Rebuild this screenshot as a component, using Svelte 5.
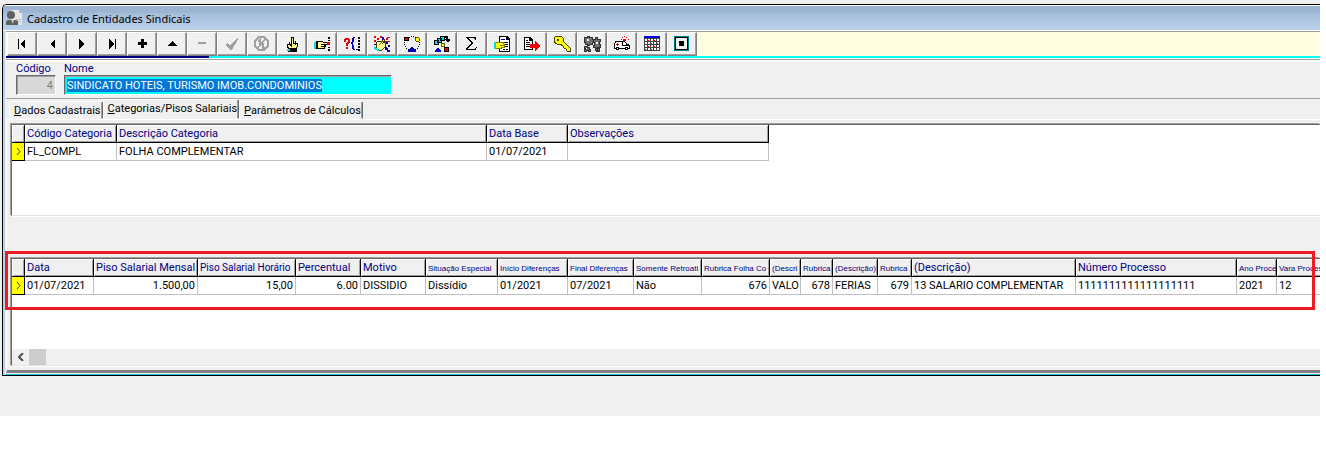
<script lang="ts">
  import { onMount } from "svelte";

  type Shape = { d: string; fill?: string; stroke?: string; width?: number };
  type Tool = { label: string; shapes: Shape[]; disabled?: boolean };
  type Column = { title: string; width: number; value: string; size?: "small" | "medium"; right?: boolean };

  const ink = "#000";
  const grey = "#a0a0a0";
  const red = "#f00000";
  const blue = "#0000c0";
  const yellow = "#ffff00";
  const cream = "#ffff90";
  const cyan = "#00e0e0";

  const tools: Tool[] = [
    { label: "Primeiro", shapes: [{ d: "M5 4h1v10H5zM12 4v10L7 9z", fill: ink }] },
    { label: "Anterior", shapes: [{ d: "M12 4v10L7 9z", fill: ink }] },
    { label: "Próximo", shapes: [{ d: "M6 4v10l5-5z", fill: ink }] },
    { label: "Último", shapes: [{ d: "M6 4v10l5-5zM12 4h1v10h-1z", fill: ink }] },
    { label: "Incluir", shapes: [{ d: "M8 4h3v3h3v3h-3v3H8v-3H5V7h3z", fill: ink }] },
    { label: "Editar", shapes: [{ d: "M4 11l5-5 5 5z", fill: ink }] },
    { label: "Excluir", disabled: true, shapes: [{ d: "M5 7h8v2H5z", fill: grey }] },
    { label: "Confirmar", disabled: true, shapes: [{ d: "M2 10l2-2 3 3 7-8 1 1-6 11H7z", fill: grey }] },
    {
      label: "Cancelar",
      disabled: true,
      shapes: [
        { d: "M6 2h5l4 4v5l-4 4H6l-4-4V6zM4 14L13 3M7 5v5M10 8v5M5 6l3-2M9 13h3", stroke: grey, width: 1.5 },
      ],
    },
    {
      label: "Selecionar",
      shapes: [
        { d: "M8 2h2v6h4v4l-1 2H6l-2-3V9h2l2 2z", fill: cream, stroke: ink },
        { d: "M10 4v5M12 6v4M6 7l2 4", stroke: ink },
        { d: "M5 13h9v4H5z", fill: ink },
        { d: "M4 14h3v2H4z", fill: cyan },
      ],
    },
    {
      label: "Localizar",
      shapes: [
        { d: "M4 6h4l2 1h5v2h-4v1h1v1h-1v2H4z", fill: cream, stroke: ink },
        { d: "M8 9h3M8 11h3", stroke: ink },
        { d: "M1 7h2v7H1z", fill: cyan },
        { d: "M3 6h1v8H3zM15 2h2v2h-2zM15 5h2v1h-2zM15 12h2v1h-2zM15 14h2v2h-2z", fill: ink },
        { d: "M14 7h3v3h-3z", fill: red },
      ],
    },
    {
      label: "Consultar",
      shapes: [
        { d: "M1 4h1V3h4v1h1v4H6v1H5v2H3V8h1V7h1V5H3v2H1zM3 12h2v2H3z", fill: red },
        { d: "M12 2h-2v1H9v4H8v2h1v5h1v1h2v-1h-1v-4h-1V7h1V3h1z", fill: blue },
        { d: "M15 2h2v2h-2zM15 5h2v2h-2zM15 8h2v2h-2zM15 11h2v2h-2zM15 14h2v2h-2zM13 14h2v1h-2z", fill: ink },
      ],
    },
    {
      label: "Filtrar",
      shapes: [
        { d: "M1 1h2v2H1zM4 3h2v2H4zM1 5h2v2H1zM7 1h2v2H7zM14 2h3v1h-2v2h-2V3h1zM12 6h5v1h-5z", fill: red },
        { d: "M9 2h2v3H9zM13 7h2v2h-2zM15 10h2v2h-2zM12 12h2v1h1v2h2v2h-3v-2h-2zM1 9h2v1H1z", fill: blue },
        { d: "M4 7l2-1 2 1 3-3 1 1-2 3 2-1v5l-3 3H5l-2-2z", fill: cream, stroke: "#404000" },
        { d: "M6 10l4-4", stroke: "#808000" },
        { d: "M1 12h2v1h1v1h2v2H4v-1H2v-1H1z", fill: cyan },
      ],
    },
    {
      label: "Processar",
      shapes: [
        {
          d: "M6 2h1v1H6zM8 1h1v1H8zM10 1h1v1h-1zM12 2h1v1h-1zM16 7h1v1h-1zM16 9h1v1h-1zM15 11h1v1h-1zM14 13h1v1h-1zM12 14h1v1h-1zM1 7h1v1H1zM1 9h1v1H1zM2 11h1v1H2zM3 13h1v1H3zM5 14h1v1H5z",
          fill: ink,
        },
        { d: "M1 2h5v4H1z", fill: ink },
        { d: "M2 3h3v2H2z", fill: red },
        { d: "M13 2h3v1h1v3h-1v1h-3V6h-1V3h1z", fill: "#606000" },
        { d: "M13 3h3v3h-3z", fill: yellow },
        { d: "M8 12h2v1h1v1h1v1h1v2H5v-2h1v-1h1v-1h1z", fill: blue },
      ],
    },
    {
      label: "Reorganizar",
      shapes: [
        { d: "M1 5h4v4H1zM4 3h4v4H4zM7 1h4v4H7z", fill: cyan, stroke: ink },
        { d: "M11 1h4v3h2v1l-2 3-3-3V4h1V3h-2z", fill: ink },
        { d: "M8 8h4v4H8z", fill: "#606000" },
        { d: "M9 9h2v2H9z", fill: yellow },
        { d: "M11 12h5v5h-5z", fill: ink },
        { d: "M12 13h3v3h-3z", fill: red },
        { d: "M4 13h2v1h1v1h1v2H2v-2h1v-1h1z", fill: blue },
      ],
    },
    { label: "Somar", shapes: [{ d: "M3 2h10v3h-1L11 3H6l4 5-5 6h6l2-2h1l-1 3H3v-1l5-6-5-5z", fill: ink }] },
    {
      label: "Visualizar",
      shapes: [
        { d: "M6 1h8l3 3v13H6z", fill: ink },
        { d: "M7 2h6v3h3v11H7z", fill: "#fff" },
        { d: "M8 4h4v1H8z", fill: blue },
        { d: "M10 7h5v1h-5zM12 9h3v1h-3zM12 11h3v1h-3zM10 14h2v1h-2zM13 14h2v1h-2z", fill: ink },
        { d: "M3 7h8v2h1v4H9v1H3z", fill: "#808000" },
        { d: "M3 8h7v1h1v1H7v1h4v1H8v1H3z", fill: yellow },
        { d: "M1 7h2v7H1z", fill: cyan },
      ],
    },
    {
      label: "Exportar",
      shapes: [
        { d: "M1 2h6l3 3v10H1z", fill: ink },
        { d: "M2 3h4v3h3v8H2z", fill: "#fff" },
        { d: "M3 5h2v1H3zM3 7h4v1H3zM3 9h4v1H3zM3 11h4v1H3z", fill: ink },
        { d: "M7 9h5V6l5 5-5 5v-3H7z", fill: red },
      ],
    },
    {
      label: "Acessos",
      shapes: [
        { d: "M3 1h5l2 2v3l7 7v3h-3l-1-2-2-1-1-2-3-2H4L1 7V3z", fill: yellow, stroke: "#404000" },
        { d: "M4 4h2v2H4z", fill: "#404000" },
      ],
    },
    {
      label: "Configurar",
      shapes: [
        {
          d: "M1 2h3V1h2v1h3v2h1v3H9v2H6v1H4V9H2V7H1zM10 4h2V2h2v2h3v2h-1v3h1v3h-3v3h-2v-3h-2v-2h1V7h-1zM1 11h3v1h2v2h1v2H5v-1H3v1H1v-2h1v-1H1zM12 13h4v3h-3z",
          fill: "#707070",
          stroke: "#303030",
        },
        { d: "M4 4h2v2H4zM13 7h2v2h-2zM3 13h1v1H3z", fill: "#f0f0f0" },
      ],
    },
    {
      label: "Suporte",
      shapes: [
        { d: "M2 6h10v1h1v1h1v1h2v1h1v4H1V8h1z", fill: ink },
        { d: "M2 8h1V7h6v4h7v2H2zM10 7h2v1h1v2h-3z", fill: "#fff" },
        { d: "M3 9h3v1H3zM4 8h1v3H4zM9 2h1v1H9zM11 1h1v1h-1zM13 2h1v1h-1zM10 4h3v2h-3zM8 4h1v1H8zM15 4h1v1h-1z", fill: red },
        { d: "M3 12h3v3H3zM12 12h3v3h-3z", fill: ink },
        { d: "M4 13h1v1H4zM13 13h1v1h-1z", fill: "#fff" },
      ],
    },
    {
      label: "Calendário",
      shapes: [
        { d: "M1 1h16v15H1z", fill: "#404040" },
        {
          d: "M2 4h2v2H2zM5 4h2v2H5zM8 4h2v2H8zM11 4h2v2h-2zM14 4h2v2h-2zM2 7h2v2H2zM5 7h2v2H5zM8 7h2v2H8zM11 7h2v2h-2zM14 7h2v2h-2zM2 10h2v2H2zM5 10h2v2H5zM8 10h2v2H8zM11 10h2v2h-2zM14 10h2v2h-2zM2 13h2v2H2zM5 13h2v2H5zM8 13h2v2H8zM11 13h2v2h-2zM14 13h2v2h-2z",
          fill: "#fff",
        },
        { d: "M1 1h16v2H1z", fill: "#0000e0" },
        { d: "M5 5h1v1H5zM11 5h1v1h-1zM8 8h1v1H8zM14 8h1v1h-1zM5 11h1v1H5zM11 11h1v1h-1zM2 14h1v1H2zM8 14h1v1H8z", fill: red },
      ],
    },
    {
      label: "Fechar",
      shapes: [
        { d: "M1 1h15v15H1z", fill: "#008080" },
        { d: "M2 2h13v13H2z", fill: ink },
        { d: "M3 3h11v11H3z", fill: "#f0f0f0" },
        { d: "M6 6h5v5H6z", fill: ink },
      ],
    },
  ];

  const tabs = ["Dados Cadastrais", "Categorias/Pisos Salariais", "Parâmetros de Cálculos"];
  let activeTab = $state(1);
  let nameInput: HTMLInputElement;

  const categories: Column[] = [
    { title: "Código Categoria", width: 92, value: "FL_COMPL" },
    { title: "Descrição Categoria", width: 370, value: "FOLHA COMPLEMENTAR" },
    { title: "Data Base", width: 81, value: "01/07/2021" },
    { title: "Observações", width: 201, value: "" },
  ];

  const wages: Column[] = [
    { title: "Data", width: 69, value: "01/07/2021" },
    { title: "Piso Salarial Mensal", width: 104, value: "1.500,00", right: true },
    { title: "Piso Salarial Horário", width: 98, value: "15,00", right: true, size: "medium" },
    { title: "Percentual", width: 65, value: "6.00", right: true },
    { title: "Motivo", width: 65, value: "DISSIDIO" },
    { title: "Situação Especial", width: 72, value: "Dissídio", size: "small" },
    { title: "Início Diferenças", width: 70, value: "01/2021", size: "small" },
    { title: "Final Diferenças", width: 66, value: "07/2021", size: "small" },
    { title: "Somente Retroati", width: 68, value: "Não", size: "small" },
    { title: "Rubrica Folha Co", width: 68, value: "676", right: true, size: "small" },
    { title: "(Descri", width: 31, value: "VALO", size: "small" },
    { title: "Rubrica", width: 32, value: "678", right: true, size: "small" },
    { title: "(Descrição)", width: 45, value: "FERIAS", size: "small" },
    { title: "Rubrica", width: 34, value: "679", right: true, size: "small" },
    { title: "(Descrição)", width: 164, value: "13 SALARIO COMPLEMENTAR" },
    { title: "Número Processo", width: 161, value: "1111111111111111111" },
    { title: "Ano Proce", width: 40, value: "2021", size: "small" },
    { title: "Vara Processo", width: 60, value: "12", size: "small" },
  ];

  const totalWidth = (columns: Column[]) => columns.reduce((sum, column) => sum + column.width, 13);

  onMount(() => {
    nameInput.focus();
    nameInput.select();
  });
</script>

{#snippet grid(columns: Column[])}
  <table style:width="{totalWidth(columns)}px">
    <colgroup>
      <col class="marker-col" />
      {#each columns as column}
        <col style:width="{column.width}px" />
      {/each}
    </colgroup>
    <thead>
      <tr>
        <th></th>
        {#each columns as column}
          <th scope="col" class={column.size}>{column.title}</th>
        {/each}
      </tr>
    </thead>
    <tbody>
      <tr>
        <td class="marker">
          <svg width="5" height="7" viewBox="0 0 5 7"><path d="M1 0l3 3.5L1 7" fill="none" stroke="#404000" /></svg>
        </td>
        {#each columns as column}
          <td class:right={column.right}>{column.value}</td>
        {/each}
      </tr>
    </tbody>
  </table>
{/snippet}

<div class="desktop">
  <main class="window">
    <header class="titlebar">
      <svg width="17" height="16" viewBox="0 0 17 16" aria-hidden="true">
        <path d="M5 0h8l3 3v12H5z" fill="#e6e6e6" />
        <path d="M13 0v3h3z" fill="#b0b0b0" />
        <path d="M10 9h5v1h-5zM11 11h4v1h-4z" fill="#c0c0c0" />
        <circle cx="5" cy="5" r="4" fill="#606060" />
        <path d="M0 15v-3q0-2 3-2h6q3 0 3 2v3z" fill="#606060" />
        <path d="M5 10h3l-1 4z" fill="#c0c0c0" />
      </svg>
      <h1>Cadastro de Entidades Sindicais</h1>
    </header>

    <div class="client">
      <div class="toolbar" role="toolbar" aria-label="Ferramentas">
        {#each tools as tool}
          <button type="button" aria-label={tool.label} disabled={tool.disabled}>
            <svg width="18" height="18" viewBox="0 0 18 18" shape-rendering="crispEdges">
              {#each tool.shapes as shape}
                <path d={shape.d} fill={shape.fill ?? "none"} stroke={shape.stroke ?? "none"} stroke-width={shape.width ?? 1} />
              {/each}
            </svg>
          </button>
        {/each}
      </div>
      <div class="strip"></div>

      <form class="fields">
        <div class="field code">
          <label for="codigo">Código</label>
          <input id="codigo" value="4" readonly />
        </div>
        <div class="field name">
          <label for="nome">Nome</label>
          <input id="nome" bind:this={nameInput} value="SINDICATO HOTEIS, TURISMO IMOB.CONDOMINIOS" />
        </div>
      </form>

      <div class="tabs" role="tablist">
        {#each tabs as tab, i}
          <button type="button" role="tab" class="tab" aria-selected={activeTab === i} onclick={() => (activeTab = i)}>
            <u>{tab[0]}</u>{tab.slice(1)}
          </button>
        {/each}
      </div>

      <div class="panel">
        <section class="grid categories">{@render grid(categories)}</section>
        <section class="wages">
          <div class="grid">
            {@render grid(wages)}
            <div class="scrollbar">
              <button type="button" aria-label="Rolar para a esquerda">
                <svg width="6" height="8" viewBox="0 0 6 8"><path d="M5 0L1 4l4 4" fill="none" stroke="#505050" stroke-width="2" /></svg>
              </button>
              <div class="thumb"></div>
            </div>
          </div>
          <div class="highlight"></div>
        </section>
      </div>
    </div>
  </main>
</div>

<style>
  :global(body) { background: #fff; }

  .desktop {
    margin-right: 6px;
    padding: 4px 0 40px 2px;
    overflow: hidden;
    background: #f0f0f0;
    color: #000;
    font: 11px/13px Roboto, sans-serif;
  }
  .window {
    border: solid #000;
    border-width: 1px 0 1px 1px;
    border-top-left-radius: 5px;
    overflow: hidden;
    background: #b9d1ea;
  }
  .titlebar {
    display: flex;
    align-items: center;
    gap: 4px;
    height: 24px;
    padding-left: 3px;
    border: solid #fff;
    border-width: 1px 0;
    background: linear-gradient(#9ab4d1 0 25%, #a4bdd9 30%, #b9d1ea);
  }
  h1 { margin: 0; padding-top: 2px; font: 11px/16px "Noto Sans", sans-serif; }

  .client {
    margin-left: 2px;
    padding-bottom: 1px;
    border-left: 1px solid #f0f0f0;
    border-bottom: 1px solid #1fc4e0;
    background: #f0f0f0;
  }
  .toolbar {
    display: flex;
    height: 24px;
    padding-left: 1px;
    border-top: 1px solid #a0a0a0;
    background: #ffffe1;
  }
  .toolbar button {
    display: flex;
    flex: none;
    align-items: center;
    justify-content: center;
    width: 30px;
    padding: 0;
    border: 1px solid;
    border-color: #fff #808080 #808080 #fff;
    background: #f0f0f0;
    box-shadow: inset -1px -1px #a0a0a0;
  }
  .strip {
    height: 2px;
    border-bottom: 1px solid #fff;
    background: linear-gradient(90deg, #000080 203px, #00ffff 203px);
  }

  .fields {
    display: flex;
    gap: 8px;
    padding: 0 0 3px 10px;
    border: solid #a0a0a0;
    border-width: 1px 0;
    box-shadow: inset 0 2px #fff;
  }
  .field { display: flex; flex-direction: column; }
  .field label { height: 15px; line-height: 18px; color: #000080; }
  .code { width: 40px; }
  .name { width: 328px; }
  input {
    box-sizing: border-box;
    width: 100%;
    height: 20px;
    padding: 1px 2px;
    border: 1px solid;
    border-color: #696969 #fff #fff #696969;
    border-radius: 0;
    outline: 0;
    box-shadow: inset 1px 1px #a0a0a0;
    font: inherit;
  }
  .code input { background: #d8d8d8; color: #808080; text-align: right; }
  .name input { background: #00ffff; line-height: 15px; }
  .name input::selection { background: #0078d7; color: #fff; }

  .tabs { display: flex; align-items: flex-end; height: 20px; padding-left: 3px; }
  .tab {
    height: 18px;
    padding: 1px 1px 0 4px;
    border: 1px solid;
    border-color: #fff #696969 transparent #fff;
    border-radius: 2px 2px 0 0;
    background: #f0f0f0;
    box-shadow: inset -1px 0 #a0a0a0;
    font: inherit;
  }
  .tab[aria-selected="true"] { height: 20px; padding: 0 1px 1px 4px; }

  .panel {
    padding: 4px 0 4px 4px;
    border: 1px solid #fff;
    border-width: 1px 0 0 1px;
    border-bottom: 3px solid #808080;
  }
  .grid {
    display: flex;
    flex-direction: column;
    overflow: hidden;
    border: solid #696969;
    border-width: 1px 0 0 1px;
    border-bottom: 1px solid #e3e3e3;
    box-shadow: -1px -1px #a0a0a0, 0 1px #fff;
    background: #fff;
  }
  .categories { height: 90px; margin-bottom: 42px; }
  .wages { position: relative; }
  .wages .grid { height: 106px; }

  table { flex: none; table-layout: fixed; border-collapse: separate; border-spacing: 0; }
  .marker-col { width: 13px; }
  th, td {
    box-sizing: border-box;
    height: 18px;
    padding: 0 1px 0 2px;
    overflow: hidden;
    white-space: nowrap;
    text-align: left;
    border: solid #c0c0c0;
    border-width: 0 1px 1px 0;
  }
  th {
    border-color: #000;
    background: #f0f0f0;
    box-shadow: inset 1px 1px #fff, inset -1px -1px #a0a0a0;
    color: #000080;
    font-weight: normal;
  }
  th.medium { font-size: 10px; }
  th.small { font: 8px/13px "Liberation Sans", sans-serif; padding-top: 2px; }
  td.right { padding-right: 2px; text-align: right; }
  td.marker { border-color: #000; background: #ffff00; text-align: center; line-height: 7px; }

  .scrollbar { display: flex; height: 16px; margin-top: auto; background: #f0f0f0; }
  .scrollbar button { width: 17px; padding: 0; border: 0; background: none; line-height: 8px; }
  .thumb { width: 17px; background: #cdcdcd; }
  .highlight {
    position: absolute;
    inset: -7px 5px 56px -6px;
    border: 3px solid #ed1c24;
    pointer-events: none;
  }
</style>
